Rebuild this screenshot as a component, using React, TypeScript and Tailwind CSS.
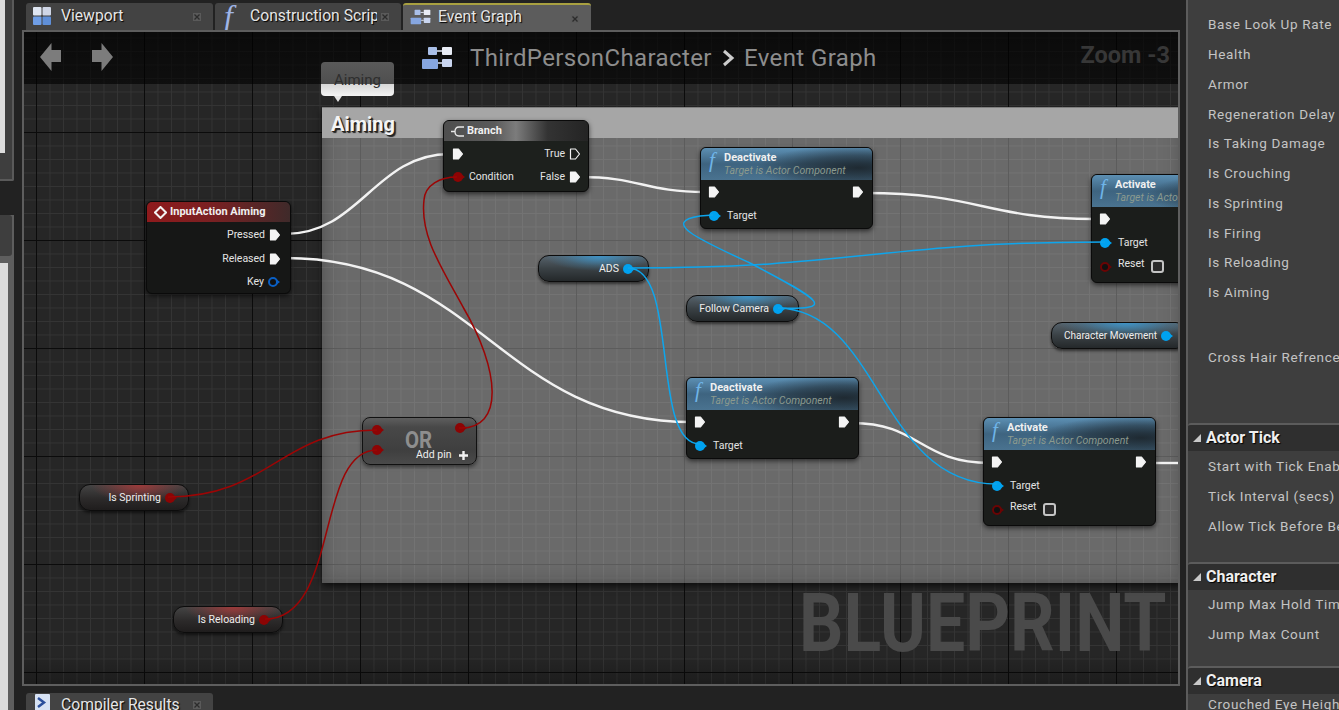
import React from "react";

const font = "font-['Roboto',sans-serif]";

function Exec({ filled = true, className = "" }: { filled?: boolean; className?: string }) {
  return (
    <svg width="12" height="14" viewBox="0 0 12 14" className={className}>
      <path d="M1.5 2 H6.5 L10.5 7 L6.5 12 H1.5 Z" fill={filled ? "#f4f4f4" : "none"} stroke="#f4f4f4" strokeWidth="1.2" strokeLinejoin="round" />
    </svg>
  );
}

function Pin({ color, hollow = false, className = "" }: { color: string; hollow?: boolean; className?: string }) {
  return (
    <svg width="14" height="12" viewBox="0 0 14 12" className={className}>
      <path d="M9.5 3.5 L13 6 L9.5 8.5 Z" fill={color} />
      <circle cx="6" cy="6" r={hollow ? 4 : 5} fill={hollow ? "#111" : color} stroke={color} strokeWidth={hollow ? 2 : 0} />
    </svg>
  );
}

function Check() {
  return <div className="ml-[2px] mt-[2px] h-[13px] w-[13px] rounded-[3px] border-2 border-[#c4c4c4] bg-[#2a2a2a]" />;
}

function FnIcon({ className = "" }: { className?: string }) {
  return <span className={`font-['Liberation_Serif',serif] italic text-[#6fb4e8] ${className}`}>f</span>;
}

function FuncNode({ name, x, y, withReset = false }: { name: string; x: string; y: string; withReset?: boolean }) {
  return (
    <div className={`absolute ${x} ${y} w-[173px] ${withReset ? "h-[109px]" : "h-[82px]"} overflow-hidden rounded-[6px] border border-[#0a0a0a] bg-[#1b1d1b] shadow-[0_2px_5px_rgba(0,0,0,0.6)]`}>
      <div className="relative h-[32px] bg-[radial-gradient(ellipse_60%_70%_at_92%_62%,rgba(27,35,41,0.9)_0%,rgba(27,35,41,0.5)_55%,transparent_100%),linear-gradient(#5c8fb3,#3e6480_50%,#4a7390)] pl-[23px] pt-[3px]">
        <FnIcon className="absolute left-[8px] top-[0px] text-[21px] leading-[24px]" />
        <div className="text-[11px] font-bold leading-[13px] text-[#f0f0f0]">{name}</div>
        <div className="whitespace-nowrap text-[10.5px] italic leading-[13px] text-[#8b9a8e]">Target is Actor Component</div>
      </div>
      <div className="flex items-center justify-between pl-[7px] pr-[8px] pt-[5px]">
        <Exec />
        <Exec />
      </div>
      <div className="flex items-center gap-[5px] pl-[7px] pt-[11px]">
        <Pin color="#00a2f0" />
        <span className="text-[10.5px] leading-[12px] text-[#e4e4e4]">Target</span>
      </div>
      {withReset && (
        <div className="flex items-start gap-[5px] pl-[7px] pt-[9px]">
          <Pin color="#6a0404" hollow className="mt-[3px]" />
          <span className="text-[10.5px] leading-[12px] text-[#e4e4e4]">Reset</span>
          <Check />
        </div>
      )}
    </div>
  );
}

function VarPill({ label, x, y, w, color, pin, size = "text-[10.5px]", pad = "pr-[12px]" }: { label: string; x: string; y: string; w: string; color: string; pin: string; size?: string; pad?: string }) {
  return (
    <div className={`absolute ${x} ${y} ${w} flex h-[27px] items-center justify-end gap-[3px] rounded-[11px] border border-[#0c0c0c] ${pad} shadow-[0_2px_3px_rgba(0,0,0,0.55)] ${color}`}>
      <span className={`whitespace-nowrap ${size} text-[#eeeeee]`}>{label}</span>
      <Pin color={pin} />
    </div>
  );
}

const blue = "bg-[radial-gradient(ellipse_50%_60%_at_55%_0%,#3f93c6_0%,rgba(63,147,198,0.25)_65%,transparent_100%),linear-gradient(#56626b,#3a4145_50%,#24282a)]";
const red = "bg-[radial-gradient(ellipse_45%_70%_at_55%_0%,#9c3a3a_0%,rgba(156,58,58,0.3)_65%,transparent_100%),linear-gradient(#444444,#2c2a2a_55%,#1f1d1d)]";

function PanelRow({ children, pitch = "h-[29.75px]" }: { children: React.ReactNode; pitch?: string }) {
  return <div className={`flex ${pitch} items-center whitespace-nowrap pl-[20px] text-[13.5px] tracking-[0.65px] text-[#c4c4c4]`}>{children}</div>;
}

function PanelHeader({ children }: { children: React.ReactNode }) {
  return (
    <div className="flex h-[28px] shrink-0 items-center rounded-tl-[3px] border-t-2 border-[#5c5c5c] bg-[#2f2f2f] pl-[4px]">
      <svg width="10" height="10" viewBox="0 0 10 10">
        <path d="M1 9 H9 V1 Z" fill="#c8c8c8" />
      </svg>
      <span className="ml-[4px] text-[16px] font-bold text-[#efefef] [text-shadow:1px_1px_1px_#000]">{children}</span>
    </div>
  );
}

function CloseMark({ className = "" }: { className?: string }) {
  return (
    <svg width="8" height="8" viewBox="0 0 8 8" className={`absolute ${className}`}>
      <rect width="8" height="8" fill="#5a5a5a" />
      <path d="M1.5 1.5 L6.5 6.5 M6.5 1.5 L1.5 6.5" stroke="#2c2c2c" strokeWidth="1.3" />
    </svg>
  );
}

function Tab({ icon, label, active = false, w }: { icon: React.ReactNode; label: string; active?: boolean; w: string }) {
  return (
    <div className={`relative flex h-[27px] ${w} items-center rounded-t-[3px] pb-[2px] pl-[6px] ${active ? "border-t-2 border-[#a8a040] bg-[#5c5c5c]" : "bg-[#434343]"}`}>
      <div className="flex w-[29px] justify-start pl-[1px]">{icon}</div>
      <span className="w-[127px] overflow-hidden whitespace-nowrap text-[15.7px] text-[#e6e6e6] [text-shadow:1px_1px_1px_#000]">{label}</span>
      <CloseMark className="right-[12px] top-[10px]" />
    </div>
  );
}

function GraphIcon({ className = "" }: { className?: string }) {
  return (
    <svg viewBox="0 0 32 24" className={className}>
      <rect x="7" y="1" width="9" height="8" rx="1" fill="#a9bfe8" />
      <rect x="21" y="1" width="10" height="8" rx="1" fill="#e8ecf5" />
      <rect x="1" y="13" width="16" height="10" rx="1" fill="#86a6e0" />
      <rect x="21" y="13" width="10" height="8" rx="1" fill="#c9d5ef" />
      <path d="M16 5 H21 M17 17 H21" stroke="#dde4f2" strokeWidth="1.5" />
    </svg>
  );
}

export default function App() {
  return (
    <div className={`${font} flex h-[710px] w-[1339px] overflow-hidden bg-[#222222]`}>
      {/* left sliver */}
      <div className="flex w-[22px] shrink-0 flex-col">
        <div className="h-[181px] w-[14px] rounded-br-[2px] border-b-2 border-r-2 border-[#5a5a5a] bg-[#3e3e3e]">
          <div className="h-[153px] w-[5px] bg-[#dcdcdc]" />
        </div>
        <div className="mt-[34px] flex min-h-0 w-[14px] flex-1 flex-col bg-[#5e5e5e]">
          <div className="h-[41px] w-[12px] rounded-r-[3px] bg-[#3e3e3e]" />
          <div className="mt-[7px] w-[8px] flex-1 bg-[#dcdcdc]" />
        </div>
      </div>

      {/* centre */}
      <div className="flex w-[1158px] shrink-0 flex-col">
        <div className="flex h-[30px] items-end gap-[2px] pl-[4px]">
          <Tab w="w-[187px]" label="Viewport" icon={
            <svg width="18" height="18" viewBox="0 0 18 18">
              <rect x="0" y="0" width="8.5" height="8.5" rx="1" fill="#dfe6f2" />
              <rect x="9.5" y="0" width="8.5" height="8.5" rx="1" fill="#cfd6e6" />
              <rect x="0" y="9.5" width="8.5" height="8.5" rx="1" fill="#6f9ee6" />
              <rect x="9.5" y="9.5" width="8.5" height="8.5" rx="1" fill="#5f8fd8" />
            </svg>
          } />
          <Tab w="w-[186px]" label="Construction Script" icon={<FnIcon className="pl-[2px] text-[32px] leading-[24px] !text-[#9fb5e6]" />} />
          <Tab w="w-[188px]" active label="Event Graph" icon={<GraphIcon className="h-[16px] w-[21px]" />} />
        </div>

        {/* graph canvas */}
        <div className="relative h-[656px] overflow-hidden border-2 border-[#5e5e5e] bg-[#262626]">
          <div className="absolute inset-0 bg-[linear-gradient(#0b0b0b_1px,transparent_1px),linear-gradient(90deg,#0b0b0b_1px,transparent_1px),linear-gradient(#343434_1px,transparent_1px),linear-gradient(90deg,#343434_1px,transparent_1px)] bg-[length:108px_108px,108px_108px,13.5px_13.5px,13.5px_13.5px] bg-[position:0px_-8px,12px_0px,0px_-8px,12px_0px]" />
          <div className="absolute inset-x-0 top-0 h-[52px] bg-[linear-gradient(rgba(0,0,0,0.72),rgba(0,0,0,0.62))]" />
          <div className="absolute inset-x-0 bottom-0 h-[30px] bg-[linear-gradient(transparent,rgba(0,0,0,0.25))]" />

          {/* watermark */}
          <div className="absolute left-[775px] top-[543px] origin-left scale-x-[0.85] whitespace-nowrap text-[82px] font-bold leading-[96px] text-[#4a4a4a]">BLUEPRINT</div>

          {/* comment box */}
          <div className="absolute left-[298px] top-[75px] h-[476px] w-[860px] bg-[#6a6a6a] shadow-[0_3px_7px_rgba(0,0,0,0.7)]">
            <div className="absolute inset-0 bg-[linear-gradient(#5c5c5c_1px,transparent_1px),linear-gradient(90deg,#5c5c5c_1px,transparent_1px),linear-gradient(#737373_1px,transparent_1px),linear-gradient(90deg,#737373_1px,transparent_1px)] bg-[length:108px_108px,108px_108px,13.5px_13.5px,13.5px_13.5px] bg-[position:0px_25px,38px_0px,0px_25px,38px_0px] shadow-[inset_0_0_18px_rgba(0,0,0,0.28)]" />
            <div className="relative h-[31px] border-t border-[#7e7e7e] bg-[#a6a6a6] pl-[9px] text-[20px] font-bold leading-[33px] text-[#f5f5f5] [text-shadow:1px_1px_0_#222,2px_2px_1px_#222]">Aiming</div>
          </div>

          {/* comment bubble */}
          <div className="absolute left-[297px] top-[30px] h-[34px] w-[73px] overflow-hidden rounded-[4px] bg-[linear-gradient(#5a5a5a_0%,#4e4e4e_66%,#d8d8d8_66%,#f4f4f4_100%)] text-center text-[15px] leading-[36px] text-[#2e2e2e]">Aiming</div>
          <svg width="10" height="6" viewBox="0 0 10 6" className="absolute left-[309px] top-[64px]"><path d="M1 0 H9 L5 6 Z" fill="#e4e4e4" /></svg>

          {/* title bar */}
          <svg width="21" height="28" viewBox="0 0 21 28" className="absolute left-[16px] top-[11px]"><path d="M0 14 L11.5 0 V7 H21 V19 H11.5 V28 Z" fill="#7c7c7c" /></svg>
          <svg width="21" height="28" viewBox="0 0 21 28" className="absolute left-[68px] top-[11px]"><path d="M21 14 L9.5 0 V7 H0 V19 H9.5 V28 Z" fill="#7c7c7c" /></svg>
          <div className="absolute left-[397px] top-[8px] flex items-center text-[24px] text-[#8d8d8d]">
            <GraphIcon className="mr-[17px] h-[24px] w-[32px]" />
            <span className="tracking-[0.4px]">ThirdPersonCharacter</span>
            <svg width="14" height="20" viewBox="0 0 14 20" className="ml-[9px] mr-[9px]"><path d="M3 3 L11 10 L3 17" fill="none" stroke="#cccccc" strokeWidth="3" /></svg>
            <span className="tracking-[0.4px]">Event Graph</span>
          </div>
          <div className="absolute right-[8px] top-[6px] text-[23.5px] font-bold text-[#373737]">Zoom -3</div>

          {/* exec wires */}
          <svg width="1154" height="652" viewBox="24 32 1154 652" className="absolute left-0 top-0" fill="none">
            <g stroke="#f2f2f2" strokeWidth="2.4">
              <path d="M285 234 C 360 234, 375 154, 450 154" />
              <path d="M285 258 C 480 258, 500 422, 692 422" />
              <path d="M580 177 C 640 177, 645 192, 705 192" />
              <path d="M865 193 C 980 193, 985 219, 1095 219" />
              <path d="M852 423 C 920 423, 920 463, 990 463" />
              <path d="M1150 463 H1178" />
            </g>
          </svg>

          {/* InputAction */}
          <div className="absolute left-[122px] top-[169px] h-[93px] w-[145px] overflow-hidden rounded-[6px] border border-[#0a0a0a] bg-[#161716] shadow-[0_2px_5px_rgba(0,0,0,0.6)]">
            <div className="flex h-[20px] items-center bg-[linear-gradient(90deg,#8f1a1c_0%,#7a2022_45%,#3f2a2a_100%)] pl-[7px]">
              <svg width="13" height="13" viewBox="0 0 13 13"><path d="M6.5 1 L12 6.5 L6.5 12 L1 6.5 Z" fill="none" stroke="#f2f2f2" strokeWidth="2" /></svg>
              <span className="ml-[3px] text-[11px] font-bold text-[#f0f0f0]">InputAction Aiming</span>
            </div>
            <div className="flex flex-col items-end pr-[9px] pt-[6px] text-[10.5px] text-[#e4e4e4]">
              <div className="flex h-[14px] items-center gap-[4px]"><span>Pressed</span><Exec /></div>
              <div className="mt-[10px] flex h-[14px] items-center gap-[4px]"><span>Released</span><Exec /></div>
              <div className="mt-[9px] flex h-[14px] items-center gap-[3px]"><span>Key</span><Pin color="#0a5fc4" hollow /></div>
            </div>
          </div>

          {/* Branch */}
          <div className="absolute left-[419px] top-[88px] h-[72px] w-[146px] overflow-hidden rounded-[6px] border border-[#0a0a0a] bg-[#1d201d] shadow-[0_2px_5px_rgba(0,0,0,0.6)]">
            <div className="flex h-[20px] items-center bg-[linear-gradient(90deg,#4e4e4e_0%,#5a5a5a_35%,#7c7c7c_50%,#333333_72%,#242424_100%)] pl-[7px]">
              <svg width="14" height="13" viewBox="0 0 14 13" fill="none" stroke="#e8e8e8" strokeWidth="1.3"><path d="M13 2 H8 Q4 2 4 6.5 Q4 11 8 11 H13 M0 6.5 H4" /></svg>
              <span className="ml-[2px] text-[11px] font-bold text-[#f0f0f0]">Branch</span>
            </div>
            <div className="flex items-center justify-between pl-[8px] pr-[7px] pt-[5px] text-[10.5px] text-[#e4e4e4]">
              <Exec />
              <div className="flex items-center gap-[4px]"><span>True</span><Exec filled={false} /></div>
            </div>
            <div className="flex items-center justify-between pl-[8px] pr-[7px] pt-[7px] text-[10.5px] text-[#e4e4e4]">
              <div className="flex items-center gap-[3px]"><Pin color="#8c0404" /><span>Condition</span></div>
              <div className="flex items-center gap-[4px]"><span>False</span><Exec /></div>
            </div>
          </div>

          <FuncNode name="Deactivate" x="left-[676px]" y="top-[115px]" />
          <FuncNode name="Activate" x="left-[1067px]" y="top-[142px]" withReset />
          <FuncNode name="Deactivate" x="left-[662px]" y="top-[345px]" />
          <FuncNode name="Activate" x="left-[959px]" y="top-[385px]" withReset />

          <VarPill label="ADS" x="left-[514px]" y="top-[223px]" w="w-[111px]" color={blue} pin="#00a2f0" />
          <VarPill label="Follow Camera" x="left-[662px]" y="top-[263px]" w="w-[113px]" color={blue} pin="#00a2f0" />
          <VarPill label="Character Movement" x="left-[1027px]" y="top-[290px]" w="w-[136px]" color={blue} pin="#00a2f0" size="text-[10px]" />
          <VarPill label="Is Sprinting" x="left-[55px]" y="top-[452px]" w="w-[110px]" color={red} pin="#8c0404" pad="pr-[10px]" />
          <VarPill label="Is Reloading" x="left-[149px]" y="top-[574px]" w="w-[110px]" color={red} pin="#8c0404" pad="pr-[10px]" />

          {/* OR node */}
          <div className="absolute left-[338px] top-[385px] h-[48px] w-[115px] rounded-[8px] border border-[#111] bg-[linear-gradient(#5e5e5e,#484848_20%,#3f3f3f_70%,#4a4a4a)] shadow-[0_2px_4px_rgba(0,0,0,0.5)]">
            <Pin color="#8c0404" className="absolute left-[8px] top-[6px]" />
            <Pin color="#8c0404" className="absolute left-[8px] top-[26px]" />
            <Pin color="#8c0404" className="absolute left-[91px] top-[4px]" />
            <div className="absolute left-[42px] top-[9px] origin-left scale-x-[0.85] text-[24px] font-bold leading-[26px] text-[#8e8e8e]">OR</div>
            <div className="absolute left-[53px] top-[31px] flex items-center gap-[7px] text-[10.5px] leading-[12px] text-[#eeeeee]">
              <span>Add pin</span>
              <svg width="9" height="9" viewBox="0 0 9 9"><path d="M4.5 0 V9 M0 4.5 H9" stroke="#f2f2f2" strokeWidth="2.4" /></svg>
            </div>
          </div>

          {/* data wires */}
          <svg width="1154" height="652" viewBox="24 32 1154 652" className="absolute left-0 top-0" fill="none">
            <g stroke="#0ea5ec" strokeWidth="1.5">
              <path d="M628 268 C 860 268, 880 242, 1105 242" />
              <path d="M628 268 C 680 268, 650 444, 700 444" />
              <path d="M778 308 C 835 310, 825 302, 750 263 C 700 240, 660 222, 700 216 L 713 215" />
              <path d="M778 308 C 880 310, 880 484, 997 484" />
            </g>
            <g stroke="#9c0505" strokeWidth="1.5">
              <path d="M459 428 C 505 430, 500 370, 463 307 C 440 265, 420 235, 424 200 C 425 185, 440 177, 457 177" />
              <path d="M168 497 C 270 497, 280 430, 377 430" />
              <path d="M265 619 C 340 619, 315 450, 377 450" />
            </g>
          </svg>
        </div>

        {/* bottom tab */}
        <div className="flex h-[24px] items-end pl-[4px]">
          <div className="relative flex h-[17px] w-[187px] overflow-hidden rounded-t-[3px] bg-[#434343] pl-[9px]">
            <svg width="16" height="17" viewBox="0 0 16 17" className="mt-[1px]">
              <rect x="0" y="0" width="15" height="17" rx="1" fill="#d7e2f4" />
              <path d="M3 4 L9 8.5 L3 13" fill="none" stroke="#2b4f9c" strokeWidth="2.5" />
            </svg>
            <span className="ml-[10px] whitespace-nowrap text-[15.7px] leading-[23px] text-[#e6e6e6] [text-shadow:1px_1px_1px_#000]">Compiler Results</span>
            <CloseMark className="right-[12px] top-[8px]" />
          </div>
        </div>
      </div>

      {/* right panel */}
      <div className="ml-[6px] flex min-w-0 flex-1 flex-col overflow-hidden border-l-2 border-[#5c5c5c] bg-[#3e3e3e]">
        <div className="h-[423px] shrink-0 overflow-hidden pt-[9.5px]">
          <PanelRow>Base Look Up Rate</PanelRow>
          <PanelRow>Health</PanelRow>
          <PanelRow>Armor</PanelRow>
          <PanelRow>Regeneration Delay</PanelRow>
          <PanelRow>Is Taking Damage</PanelRow>
          <PanelRow>Is Crouching</PanelRow>
          <PanelRow>Is Sprinting</PanelRow>
          <PanelRow>Is Firing</PanelRow>
          <PanelRow>Is Reloading</PanelRow>
          <PanelRow>Is Aiming</PanelRow>
          <div className="mt-[35px]"><PanelRow>Cross Hair Refrence</PanelRow></div>
        </div>
        <PanelHeader>Actor Tick</PanelHeader>
        <div className="h-[111px] shrink-0">
          <PanelRow pitch="h-[30px]">Start with Tick Enabled</PanelRow>
          <PanelRow pitch="h-[30px]">Tick Interval (secs)</PanelRow>
          <PanelRow pitch="h-[30px]">Allow Tick Before Begin Play</PanelRow>
        </div>
        <PanelHeader>Character</PanelHeader>
        <div className="-mt-[1px] h-[77px] shrink-0">
          <PanelRow pitch="h-[30px]">Jump Max Hold Time</PanelRow>
          <PanelRow pitch="h-[30px]">Jump Max Count</PanelRow>
        </div>
        <PanelHeader>Camera</PanelHeader>
        <PanelRow>Crouched Eye Height</PanelRow>
      </div>
    </div>
  );
}
